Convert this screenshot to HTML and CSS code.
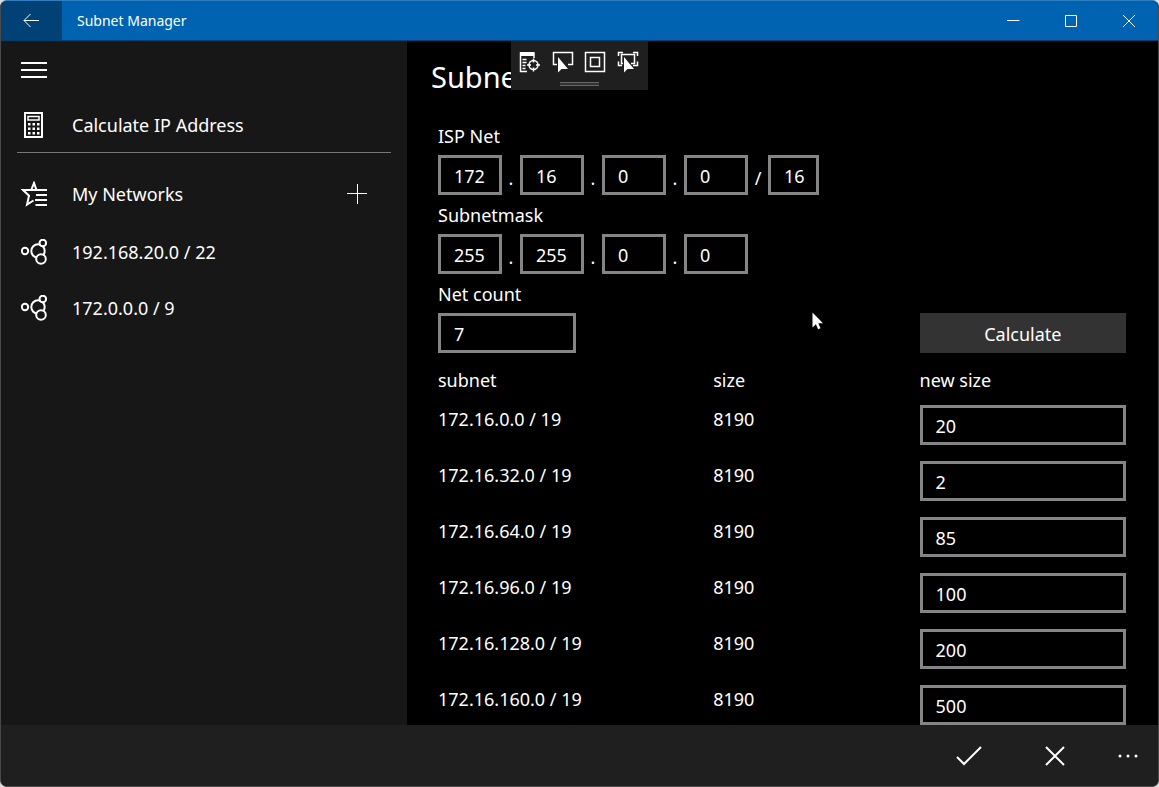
FILE: index.html
```html
<!DOCTYPE html>
<html lang="en">
<head>
    <meta charset="UTF-8">
    <meta name="viewport" content="width=device-width, initial-scale=1.0">
    <title>Subnet Manager</title>
    <link rel="stylesheet" href="styles.css">
</head>
<body>
    <div class="window">
        <header class="titlebar">
            <button class="back" aria-label="Back">
                <svg width="18" height="16" viewBox="0 0 18 16"><path d="M16 7.500H1M7.500 1L1 7.500 7.500 14"/></svg>
            </button>
            <span class="app-name">Subnet Manager</span>
            <div class="window-buttons">
                <button aria-label="Minimize"><svg width="14" height="14" viewBox="0 0 14 14"><path d="M1 6.500h12.500"/></svg></button>
                <button aria-label="Maximize"><svg width="14" height="14" viewBox="0 0 14 14"><path d="M1.500 1.500h11v11h-11z"/></svg></button>
                <button aria-label="Close"><svg width="14" height="14" viewBox="0 0 14 14"><path d="M1 1l12 12M13 1L1 13"/></svg></button>
            </div>
        </header>

        <div class="content">
            <nav class="sidebar">
                <button class="hamburger" aria-label="Menu">
                    <svg width="26" height="26" viewBox="0 0 26 26"><path d="M0 6h26M0 13h26M0 20h26"/></svg>
                </button>
                <a class="nav-item calc" href="#">
                    <svg width="26" height="26" viewBox="0 0 26 26">
                        <path d="M4 1h17v24H4z"/>
                        <path class="display" d="M7 4.500h11v3.500h-11z"/>
                        <path class="keys" d="M7 11h2.500v2.500H7zM11.500 11H14v2.500h-2.500zM16 11h2.500v2.500H16zM7 15.500h2.500V18H7zM11.500 15.500H14V18h-2.500zM16 15.500h2.500V18H16zM7 20h2.500v2.500H7zM11.500 20H14v2.500h-2.500zM16 20h2.500v2.500H16z"/>
                    </svg>
                    <span>Calculate IP Address</span>
                </a>
                <div class="nav-group">
                    <svg width="26" height="26" viewBox="0 0 26 26">
                        <path d="M26 9H15.500L13 2l-2.800 7H2l6 5.700-2 9 6.500-4.200M11 9l5-.100M15 14h11M14 19h12M14.500 24H26"/>
                    </svg>
                    <span>My Networks</span>
                    <button class="add" aria-label="Add network">
                        <svg width="20" height="20" viewBox="0 0 20 20"><path d="M0 9.500h20M10.500 0v20"/></svg>
                    </button>
                </div>
                <a class="nav-item net" href="#">
                    <svg width="26" height="26" viewBox="0 0 26 26">
                        <circle cx="17" cy="12" r="6.700"/><circle cx="4" cy="12" r="3.200"/>
                        <circle cx="21.800" cy="4" r="3.300"/><circle cx="20" cy="20" r="4.800"/>
                    </svg>
                    <span>192.168.20.0 / 22</span>
                </a>
                <a class="nav-item net" href="#">
                    <svg width="26" height="26" viewBox="0 0 26 26">
                        <circle cx="17" cy="12" r="6.700"/><circle cx="4" cy="12" r="3.200"/>
                        <circle cx="21.800" cy="4" r="3.300"/><circle cx="20" cy="20" r="4.800"/>
                    </svg>
                    <span>172.0.0.0 / 9</span>
                </a>
            </nav>

            <main class="page">
                <h1>Subnet</h1>

                <div class="debug-bar">
                    <div class="debug-tools">
                        <button aria-label="Live visual tree">
                            <svg width="22" height="22" viewBox="0 0 22 22"><path d="M8 20.500H1.500V2H15v5M3.500 8.500h4M3.500 11.500h4M3.500 14.500h3M3.500 17.500h3"/><path class="solid" d="M1 1h14v4H1z"/><circle cx="14.500" cy="14" r="4.500"/><path d="M14.500 7.500v4M14.500 16.500v4M8 14h4M17 14h4"/></svg>
                        </button>
                        <button aria-label="Select element">
                            <svg width="22" height="22" viewBox="0 0 22 22"><path d="M5 13.500H1.500v-12h19v12H16"/><path class="solid" d="M6 6v15.500l3.500-3.500h6.500z"/></svg>
                        </button>
                        <button aria-label="Layout adorners">
                            <svg width="22" height="22" viewBox="0 0 22 22"><path d="M1.500 1.500h19v19h-19zM6.500 6.500h9v9h-9z"/></svg>
                        </button>
                        <button aria-label="Track focused element">
                            <svg width="22" height="22" viewBox="0 0 22 22"><path d="M1.500 5V1.500H6M16 1.500h4.500V5M1.500 10.500v4H5M20.500 10.500v4H16M6 12.500H4.500v-9h13v9H14"/><path class="solid" d="M7 6v15.500l3.500-3.500H17z"/></svg>
                        </button>
                    </div>
                    <div class="grip"></div>
                </div>

                <form class="form">
                    <label for="isp1">ISP Net</label>
                    <div class="octets">
                        <input id="isp1" type="text" value="172">
                        <span>.</span>
                        <input type="text" aria-label="ISP Net octet 2" value="16">
                        <span>.</span>
                        <input type="text" aria-label="ISP Net octet 3" value="0">
                        <span>.</span>
                        <input type="text" aria-label="ISP Net octet 4" value="0">
                        <span class="slash">/</span>
                        <input class="prefix" type="text" aria-label="Prefix length" value="16">
                    </div>

                    <label for="mask1">Subnetmask</label>
                    <div class="octets">
                        <input id="mask1" type="text" value="255">
                        <span>.</span>
                        <input type="text" aria-label="Subnetmask octet 2" value="255">
                        <span>.</span>
                        <input type="text" aria-label="Subnetmask octet 3" value="0">
                        <span>.</span>
                        <input type="text" aria-label="Subnetmask octet 4" value="0">
                    </div>

                    <label for="netCount">Net count</label>
                    <div class="count-row">
                        <input id="netCount" class="count" type="text" value="7">
                        <button class="calculate" type="button">Calculate</button>
                    </div>

                    <table class="subnets">
                        <thead>
                            <tr><th>subnet</th><th>size</th><th>new size</th></tr>
                        </thead>
                        <tbody>
                            <tr><td>172.16.0.0 / 19</td><td>8190</td><td><input type="text" aria-label="New size of 172.16.0.0" value="20"></td></tr>
                            <tr><td>172.16.32.0 / 19</td><td>8190</td><td><input type="text" aria-label="New size of 172.16.32.0" value="2"></td></tr>
                            <tr><td>172.16.64.0 / 19</td><td>8190</td><td><input type="text" aria-label="New size of 172.16.64.0" value="85"></td></tr>
                            <tr><td>172.16.96.0 / 19</td><td>8190</td><td><input type="text" aria-label="New size of 172.16.96.0" value="100"></td></tr>
                            <tr><td>172.16.128.0 / 19</td><td>8190</td><td><input type="text" aria-label="New size of 172.16.128.0" value="200"></td></tr>
                            <tr><td>172.16.160.0 / 19</td><td>8190</td><td><input type="text" aria-label="New size of 172.16.160.0" value="500"></td></tr>
                        </tbody>
                    </table>
                </form>

                <svg class="pointer" width="12" height="18" viewBox="0 0 12 18"><path d="M.5.500v15l3.400-3.300 2.200 5.100 2.400-1-2.200-5H11z"/></svg>
            </main>
        </div>

        <footer class="commands">
            <button aria-label="Accept"><svg width="26" height="20" viewBox="0 0 26 20"><path d="M1 11l7 7L25 1"/></svg></button>
            <button aria-label="Cancel"><svg width="20" height="20" viewBox="0 0 20 20"><path d="M1 1l18 18M19 1L1 19"/></svg></button>
            <button class="more" aria-label="More"><svg width="20" height="20" viewBox="0 0 20 20"><circle cx="2" cy="10" r="1.500"/><circle cx="10" cy="10" r="1.500"/><circle cx="18" cy="10" r="1.500"/></svg></button>
        </footer>
    </div>
</body>
</html>
```
FILE: styles.css
```css
* {
    box-sizing: border-box;
}
body {
    margin: 0;
    background-color: #ddd;
    color: #fff;
    font-family: "Segoe UI", "Noto Sans", "Open Sans", sans-serif;
    font-size: 18px;
    line-height: 24px;
}
button {
    display: flex;
    align-items: center;
    justify-content: center;
    padding: 0;
    border: none;
    background: none;
    color: #fff;
    font: inherit;
}
svg {
    display: block;
    flex: none;
    fill: none;
    stroke: #fff;
    stroke-width: 2;
}
a {
    color: #fff;
    text-decoration: none;
}
.window {
    display: flex;
    flex-direction: column;
    height: 100vh;
    border: 1px solid #4a4a4a;
    border-top-color: #2f7fc0;
    border-radius: 7px;
    background-color: #000;
    overflow: hidden;
}

/* title bar */
.titlebar {
    display: flex;
    flex: none;
    height: 40px;
    background-color: #0063b1;
    border-bottom: 1px solid #003f72;
}
.titlebar svg {
    stroke-width: 1;
}
.back {
    width: 61px;
    background-color: #004275;
}
.app-name {
    padding-left: 15px;
    font-size: 14px;
    line-height: 40px;
}
.window-buttons {
    display: flex;
    margin-left: auto;
}
.window-buttons button {
    width: 58px;
}

.content {
    display: flex;
    flex: 1;
    min-height: 0;
}

/* sidebar */
.sidebar {
    flex: none;
    width: 406px;
    padding: 0 16px;
    background-color: #171717;
}
.hamburger {
    width: 34px;
    height: 58px;
}
.nav-item,
.nav-group {
    display: flex;
    align-items: center;
    gap: 25px;
    height: 56px;
    padding: 0 4px;
}
.calc {
    height: 54px;
    padding-bottom: 2px;
    border-bottom: 1px solid #767676;
}
.calc .keys {
    fill: #fff;
    stroke: none;
}
.calc .display {
    stroke-width: 1.5;
}
.nav-group {
    margin: 13px 0 2px;
}
.net svg {
    fill: #171717;
}
.add {
    margin-left: auto;
    padding: 0 20px;
}
.add svg {
    stroke-width: 1;
}

/* page */
.page {
    position: relative;
    flex: 1;
    min-width: 0;
    overflow: hidden;
    background-color: #000;
}
h1 {
    margin: 0;
    padding: 16px 24px 0;
    font-size: 29px;
    font-weight: 400;
    line-height: 40px;
}
.debug-bar {
    position: absolute;
    top: 0;
    left: 104px;
    width: 137px;
    height: 49px;
    padding: 10px 9px 0 8px;
    background-color: #1f1f1f;
}
.debug-tools {
    display: flex;
    justify-content: space-between;
}
.debug-bar svg {
    stroke-width: 1.5;
}
.debug-bar .solid {
    fill: #fff;
    stroke: none;
}
.grip {
    width: 39px;
    height: 4px;
    margin: 9px auto 0;
    border: 1px solid #666;
    border-width: 1px 0;
    background-color: #333;
}
.form {
    padding: 27px 32px 0 31px;
}
.form label {
    display: block;
    margin-bottom: 7px;
}
input {
    width: 64px;
    height: 40px;
    padding: 1px 0 0 13px;
    border: 3px solid #858585;
    border-radius: 0;
    background-color: #000;
    color: #fff;
    font: inherit;
}
.octets {
    display: flex;
    margin-bottom: 8px;
}
.octets span {
    width: 18px;
    padding-top: 11px;
    text-align: center;
}
.octets .slash {
    width: 20px;
}
.prefix {
    width: 51px;
}
.count {
    width: 138px;
}
.count-row {
    display: flex;
    justify-content: space-between;
}
.calculate {
    width: 30%;
    padding-top: 2px;
    background-color: #333;
}
.subnets {
    width: 100%;
    margin-top: 15px;
    border-collapse: collapse;
    table-layout: fixed;
}
.subnets th,
.subnets td {
    width: 30%;
    padding: 0 0 16px;
    font-weight: 400;
    text-align: left;
    vertical-align: top;
}
.subnets th {
    padding-bottom: 13px;
}
.subnets th:first-child {
    width: 40%;
}
.subnets td {
    line-height: 28px;
}
.subnets input {
    display: block;
    width: 100%;
}
.pointer {
    position: absolute;
    top: 271px;
    left: 405px;
    fill: #fff;
    stroke: none;
}

/* command bar */
.commands {
    display: flex;
    flex: none;
    justify-content: flex-end;
    height: 61px;
    background-color: #1f1f1f;
}
.commands button {
    width: 86px;
}
.commands .more {
    width: 60px;
}
.more svg {
    fill: #fff;
    stroke: none;
}
```
